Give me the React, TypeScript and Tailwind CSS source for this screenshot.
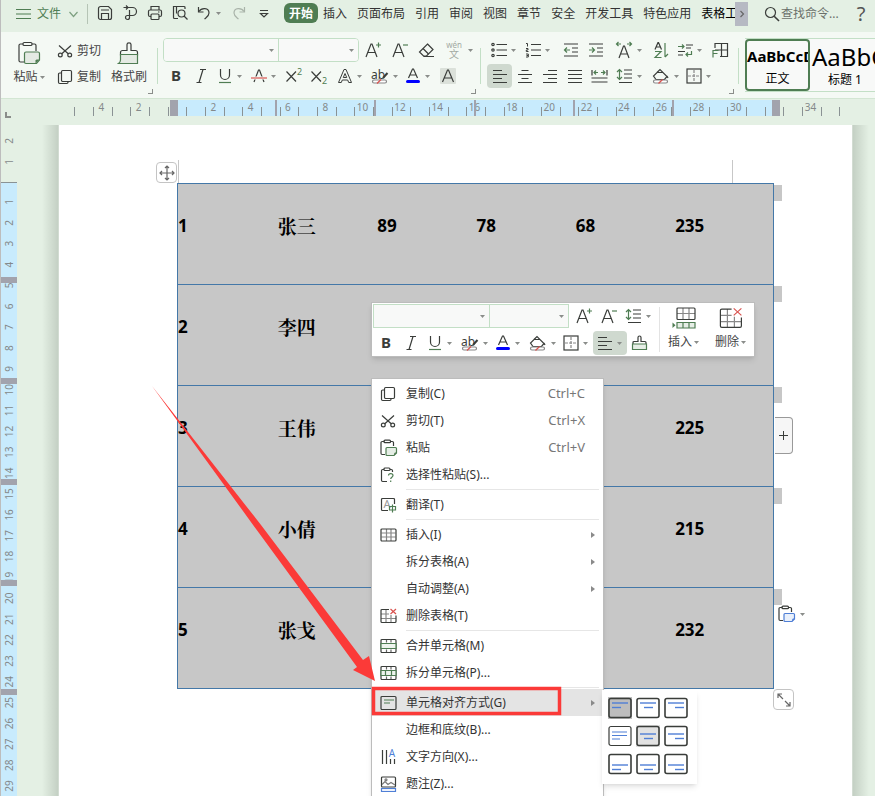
import type { ReactNode } from 'react';
import clsx from 'clsx';

const INK = '#3a3d3a';
const GREEN = '#4f7d53';
const RED = '#d9534f';
const BLUE = '#4f7fd6';

type IconProps = { w?: number; h?: number; children: ReactNode };

const Icon = ({ w = 16, h = 16, children }: IconProps) => (
  <svg
    width={w}
    height={h}
    viewBox={`0 0 ${w} ${h}`}
    fill="none"
    stroke={INK}
    strokeWidth={1.2}
    className="shrink-0"
    aria-hidden="true"
  >
    {children}
  </svg>
);

const Caret = () => (
  <svg width="5" height="3" viewBox="0 0 5 3" className="shrink-0" aria-hidden="true">
    <path d="M0 0h5L2.5 3z" fill="#8a8d8a" />
  </svg>
);

const Letter = ({ x, y, size, fill = INK, bold, text }: {
  x: number; y: number; size: number; fill?: string; bold?: boolean; text: string;
}) => (
  <text x={x} y={y} fontSize={size} fill={fill} stroke="none" textAnchor="middle" fontWeight={bold ? 700 : 400}>
    {text}
  </text>
);

/* ---------- icons ---------- */

const CopyIcon = () => (
  <Icon>
    <rect x="4.5" y="1.5" width="10" height="11" rx="1.2" />
    <path d="M4.5 4H2.7a1.2 1.2 0 0 0-1.2 1.2v8.1a1.2 1.2 0 0 0 1.2 1.2h7.1a1.2 1.2 0 0 0 1.2-1.2v-.8" />
  </Icon>
);

const CutIcon = () => (
  <Icon>
    <path d="M2 2.5l9.5 8.5M14 2.5L4.5 11" />
    <circle cx="3.3" cy="12" r="1.9" />
    <circle cx="12.7" cy="12" r="1.9" />
  </Icon>
);

const PasteIcon = ({ color = GREEN, fill = '#e6eee6' }: { color?: string; fill?: string }) => (
  <Icon w={18} h={18}>
    <path d="M4.5 2.5H2.2A1.2 1.2 0 0 0 1 3.7v10.6a1.2 1.2 0 0 0 1.2 1.2H5M10.5 2.5h1.8a1.2 1.2 0 0 1 1.2 1.2V7" />
    <rect x="4" y="1.2" width="6.500" height="2.500" rx="1" />
    <path d="M7 8.500h8.500a1 1 0 0 1 1 1V14l-2.500 2.500H7a1 1 0 0 1-1-1v-6a1 1 0 0 1 1-1z" stroke={color} fill={fill} />
    <path d="M16.500 13.500v.500l-2.500 2.500v-2l1-1z" fill={color} stroke="none" />
  </Icon>
);

const BigPasteIcon = () => (
  <Icon w={24} h={24}>
    <path d="M6 3H3.500A1.500 1.500 0 0 0 2 4.500v15A1.500 1.500 0 0 0 3.500 21H7M15 3h2.500A1.500 1.500 0 0 1 19 4.500V10" />
    <rect x="6" y="1.500" width="9" height="3" rx="1.300" />
    <path d="M9 11h12a1.500 1.500 0 0 1 1.500 1.500V19l-3 3.500H9A1.500 1.500 0 0 1 7.500 21v-8.500A1.500 1.500 0 0 1 9 11z" stroke={GREEN} fill="#e4eae3" />
    <path d="M22.500 18.500l-4 4v-3l1-1z" fill={GREEN} stroke="none" />
  </Icon>
);

const PasteSpecialIcon = () => (
  <Icon>
    <path d="M4 2.500H2.700a1.200 1.200 0 0 0-1.200 1.200v9.600a1.200 1.200 0 0 0 1.200 1.200H7M10 2.500h1.300a1.200 1.200 0 0 1 1.200 1.200V5" />
    <rect x="4" y="1" width="6" height="2.500" rx="1" />
    <path d="M8.500 8.500c0-2.600 4.500-2.600 4.500 0 0 1.700-2.300 1.700-2.300 3.500M10.700 13.500v1.500" stroke={GREEN} />
  </Icon>
);

const BrushIcon = ({ small }: { small?: boolean }) =>
  small ? (
    <Icon w={17} h={16}>
      <path d="M2 9V7.500a1 1 0 0 1 1-1h4V2.500a1.500 1.500 0 0 1 3 0v4h4a1 1 0 0 1 1 1V9" />
      <path d="M1.500 9h14v5.500h-14z" stroke={GREEN} fill="#e6eee6" />
    </Icon>
  ) : (
    <Icon w={24} h={24}>
      <path d="M10 9.500V3.500C10 1.300 14 1.300 14 3.500v6h4.500a2 2 0 0 1 2 2V14h-17v-2.500a2 2 0 0 1 2-2z" />
      <path d="M3.500 13.500h17v9h-19c1.500-1 2-2 2-3.500z" stroke={GREEN} fill="#e4eae3" />
    </Icon>
  );

const TranslateIcon = () => (
  <Icon w={17}>
    <path d="M14.500 7V2.500a1 1 0 0 0-1-1h-11a1 1 0 0 0-1 1v10a1 1 0 0 0 1 1H8" />
    <Letter x={7} y={11} size={11} fill="#999" text="A" />
    <path d="M9.500 9.500h6v3.500h-6zM12.500 7.500v8" stroke={GREEN} />
  </Icon>
);

const TableIcon = () => (
  <Icon w={17}>
    <path d="M1.500 6h14M1.500 10h14M6.500 2v12M11 2v12" stroke="#888" />
    <rect x="1" y="2" width="15" height="12" rx="1" />
  </Icon>
);

const DeleteTableIcon = ({ big }: { big?: boolean }) => {
  const s = big ? 1.4 : 1;
  return (
    <Icon w={big ? 24 : 17} h={big ? 23 : 16}>
      <g transform={`scale(${s})`} strokeWidth={1.2 / s}>
        <path d="M1 6h8M1 10.500h15M6 1.500v13M11 7v7.500" stroke="#888" />
        <path d="M9 1.500H2a1 1 0 0 0-1 1v11a1 1 0 0 0 1 1h13a1 1 0 0 0 1-1V7.500" />
        <path d="M10.500 1l5.500 5M16 1l-5.500 5" stroke={RED} />
      </g>
    </Icon>
  );
};

const InsertRowIcon = () => (
  <Icon w={24} h={23}>
    <path d="M5 6.500h18M11 1v11M17 1v11" stroke="#888" />
    <rect x="5" y="1" width="18" height="11.500" rx="1" />
    <path d="M5 15.500h18v5.500H5zM11 15.500v5.500M17 15.500v5.500" stroke={GREEN} fill="#e6eee6" />
    <path d="M0.500 15.500l3 2.700-3 2.700z" fill={GREEN} stroke="none" />
  </Icon>
);

const MergeIcon = ({ split }: { split?: boolean }) => (
  <Icon w={17}>
    <path d="M6.500 1.500v3M11 1.500v3M6.500 11.500v3M11 11.500v3" stroke="#666" />
    <rect x="1" y="1.500" width="15" height="13" rx="1" />
    <path d="M1 5.500h15v5H1z" stroke={GREEN} fill="#eef4ee" />
    {split && <path d="M5.500 5.500v5M11.500 5.500v5" stroke={GREEN} />}
  </Icon>
);

const CellAlignIcon = () => (
  <Icon w={17}>
    <rect x="1" y="1.500" width="15" height="13" rx="1" />
    <path d="M4 5h10M4 8h6" stroke={GREEN} />
  </Icon>
);

const TextDirIcon = () => (
  <Icon w={17}>
    <path d="M2.500 1v14M6.500 1v14M10.500 10v5M14.500 10v5" />
    <Letter x={12} y={8} size={10} fill={BLUE} text="A" />
  </Icon>
);

const CaptionIcon = () => (
  <Icon w={17}>
    <rect x="1.500" y="1" width="14" height="10" rx="1" />
    <path d="M2 8.500l3-3 3 3 3-2 4 2.500" stroke="#777" />
    <circle cx="6" cy="3.800" r="1" stroke="#777" />
    <rect x="1.500" y="12.500" width="14" height="3" stroke={BLUE} />
  </Icon>
);

const SaveIcon = () => (
  <Icon>
    <path d="M3.500 1.500h8l3 3v8a2 2 0 0 1-2 2h-9a2 2 0 0 1-2-2v-9a2 2 0 0 1 2-2z" />
    <path d="M4 5h8M4.500 14V8.500h7V14" />
  </Icon>
);

const ExportIcon = () => (
  <Icon>
    <path d="M1.500 2.500h9a4 4 0 0 1 0 8H7M4 .500l2 2-2 2" />
    <path d="M7.500 5v7.500a2 2 0 1 1-2-2h2" />
  </Icon>
);

const PrintIcon = () => (
  <Icon>
    <path d="M4 5V1.500h8V5M4 11.500H3a1.500 1.500 0 0 1-1.500-1.500V6.500A1.500 1.500 0 0 1 3 5h10a1.500 1.500 0 0 1 1.500 1.500V10a1.500 1.500 0 0 1-1.500 1.500h-1" />
    <rect x="4" y="9" width="8" height="5.500" rx="1" />
    <path d="M11 7h1.500" />
  </Icon>
);

const PreviewIcon = () => (
  <Icon>
    <path d="M13 4V2.500a1 1 0 0 0-1-1H1.500v11a1 1 0 0 0 1 1H6M4.500 1.500v7" />
    <circle cx="9.500" cy="8.500" r="3.500" />
    <path d="M12 11l3.500 3.500" />
  </Icon>
);

const UndoIcon = ({ redo }: { redo?: boolean }) => (
  <Icon>
    <g transform={redo ? 'translate(16 0) scale(-1 1)' : undefined} stroke={redo ? '#a9b3a9' : INK}>
      <path d="M2.500 2v5h5" />
      <path d="M3 6.500C5.500 2.500 13 2.500 13 8c0 3-2 4-4.500 6" />
    </g>
  </Icon>
);

const MoreIcon = () => (
  <Icon>
    <path d="M4 5.500h8M4.500 8.500L8 12l3.500-3.500z" />
  </Icon>
);

const SearchIcon = () => (
  <Icon>
    <circle cx="6.500" cy="6.500" r="5" />
    <path d="M10.200 10.200L15 15" strokeWidth="1.600" />
  </Icon>
);

const BoldIcon = () => (
  <Icon>
    <Letter x={8} y={13} size={15} bold text="B" />
  </Icon>
);

const ItalicIcon = () => (
  <Icon>
    <path d="M7 1.500h6M3.500 14.500h5M10 1.500l-4 13" />
  </Icon>
);

const UnderlineIcon = () => (
  <Icon>
    <path d="M3.500 1v6a4.500 4.500 0 0 0 9 0V1" />
    <path d="M2 14.500h12" stroke={GREEN} />
  </Icon>
);

const StrikeIcon = () => (
  <Icon>
    <path d="M3 14L7.500 2h1L13 14" />
    <path d="M0 10h16" stroke="#f4f9f4" strokeWidth="3" />
    <path d="M0 10h16" stroke={RED} />
  </Icon>
);

const ScriptIcon = ({ sup }: { sup?: boolean }) => (
  <Icon w={18}>
    <path d="M1.500 3.500l9.500 10M11 3.500l-9.500 10" />
    <Letter x={14.500} y={sup ? 7 : 16} size={9} fill={GREEN} text="2" />
  </Icon>
);

const SizeIcon = ({ up }: { up?: boolean }) => (
  <Icon w={18} h={18}>
    <path d="M2 16L7 3h1l5 13M4 11.500h7" />
    <path d={up ? 'M14.500 1.500v5M12 4h5' : 'M12 4h5'} stroke={GREEN} />
  </Icon>
);

const EraserIcon = () => (
  <Icon w={17}>
    <path d="M9.500 2L15 7.500 8.500 14H5.500L1.500 10z" />
    <path d="M5 6.500l5.500 5.500M5.500 14.500H16" />
  </Icon>
);

const PinyinIcon = () => (
  <Icon w={20} h={20}>
    <Letter x={10} y={8} size={8} fill="#a3aaa3" text="wén" />
    <Letter x={10} y={18} size={10} fill="#a3aaa3" text="文" />
  </Icon>
);

const OutlineAIcon = () => (
  <Icon>
    <path d="M1.500 14.500L7 1.500h2l5.500 13h-2.800l-1-2.500H5.300l-1 2.500zM6.300 9.500L8 5.500l1.700 4z" strokeWidth="1" />
  </Icon>
);

const HighlightIcon = () => (
  <Icon w={18}>
    <Letter x={7} y={11} size={12} text="ab" />
    <path d="M16.500 5l-4.500 5" strokeWidth="2" />
    <rect x="1.500" y="12" width="14" height="3" rx="1.500" stroke="#888" fill="#fff" />
    <path d="M6 15.500l4-4" stroke={RED} />
  </Icon>
);

const FontColorIcon = () => (
  <Icon>
    <path d="M3.500 10L7.500 1h1l4 9M5 7h6" />
    <rect x="1" y="12" width="14" height="3" rx="1.500" fill="#0000ff" stroke="none" />
  </Icon>
);

const ShadeAIcon = () => (
  <Icon>
    <rect width="16" height="16" rx="1" fill="#dbe1da" stroke="none" />
    <path d="M2.500 14L7.500 2h1l5 12M4.500 10h7" />
  </Icon>
);

const BulletsIcon = () => (
  <Icon>
    <path d="M5.500 2.500H16M5.500 8H16M5.500 13.500H16" />
    <circle cx="2" cy="2.500" r="1.200" />
    <circle cx="2" cy="8" r="1.200" />
    <circle cx="2" cy="13.500" r="1.200" />
  </Icon>
);

const NumberingIcon = () => (
  <Icon>
    <path d="M6 2.500h10M6 8h10M6 13.500h10" />
    <path d="M1 1.500h1.500v3M1 6.500h2V8H1.300v1.500H3.500M1 12h2.300v3H1M3.300 13.500H1.500" strokeWidth="1" />
  </Icon>
);

const IndentIcon = ({ out }: { out?: boolean }) => (
  <Icon>
    <path d="M1 2h14M9 6h6M9 10h6M1 14h14" />
    <path d={out ? 'M7 8H1.500M4 5.500L1.500 8 4 10.500' : 'M1 8h5.500M4 5.500L6.500 8 4 10.500'} stroke={GREEN} />
  </Icon>
);

const CharScaleIcon = () => (
  <Icon w={18} h={18}>
    <path d="M4 17L8.500 5h1L14 17M5.500 13h7" />
    <path d="M6 3H1.500M3.500 1l-2 2 2 2M12 3h4.500M14.500 1l2 2-2 2" stroke={GREEN} />
  </Icon>
);

const SortIcon = () => (
  <Icon>
    <path d="M2 7.500L5 .500h.500l3 7M3 5h4.500" />
    <path d="M2 9.500h6l-6 6h6.500" stroke={GREEN} />
    <path d="M12 1v14M12 15l3-3" stroke={GREEN} />
  </Icon>
);

const TabsIcon = () => (
  <Icon>
    <path d="M9 3h7M9 6h5M1 9.500h7M1 13h5" />
    <path d="M1 4.500h6M5 2.500l2 2-2 2M14.500 9v3.500H9M11 10.500l-2 2 2 2" stroke={GREEN} />
  </Icon>
);

const TableTextIcon = () => (
  <Icon w={18}>
    <path d="M4 6V1.500h12.500v13H9M10.500 1.500v13M4 8h12.500" />
    <path d="M2 15.500V8.500h5.500M2 11.500h4.500" stroke={GREEN} />
  </Icon>
);

const TextAlignIcon = ({ kind }: { kind: 'left' | 'center' | 'right' | 'justify' }) => (
  <Icon>
    {kind === 'left' && <path d="M1 2.500h9M1 6.500h14M1 10.500h9M1 14.500h14" />}
    {kind === 'center' && <path d="M4.500 2.500h7M1 6.500h14M4.500 10.500h7M1 14.500h14" />}
    {kind === 'right' && <path d="M6 2.500h9M1 6.500h14M6 10.500h9M1 14.500h14" />}
    {kind === 'justify' && <path d="M1 2.500h14M1 6.500h14M1 10.500h14M1 14.500h14" />}
  </Icon>
);

const DistributeIcon = () => (
  <Icon w={17}>
    <path d="M.500 10h16M.500 14h16M1 2v5.500M16 2v5.500" />
    <path d="M3 4.500h4M5 2.500l-2 2 2 2M14 4.500h-4M12 2.500l2 2-2 2" stroke={GREEN} />
  </Icon>
);

const LineSpacingIcon = () => (
  <Icon w={17}>
    <path d="M8 2h8M8 6h8M8 10h8M3 14.500h13" />
    <path d="M3.500 1.500v10M1 4l2.500-2.500L6 4M1 9l2.500 2.500L6 9" stroke={GREEN} />
  </Icon>
);

const FillIcon = () => (
  <Icon w={18}>
    <path d="M5 4.500l3-3 7 7-2.500 3H4L1.500 8 5 4.500h6M15 8l1 2" />
    <rect x="1.500" y="12" width="14" height="3" rx="1.500" stroke="#888" fill="#fff" />
    <path d="M6.500 15.500l4-4" stroke={RED} />
  </Icon>
);

const BorderIcon = () => (
  <Icon>
    <rect x="1" y="1" width="14" height="14" />
    <path d="M8 2v12M2 8h12" stroke="#888" strokeDasharray="3 1" />
  </Icon>
);

/* ---------- small building blocks ---------- */

type ToolProps = { label: string; drop?: boolean; active?: boolean; wide?: boolean; children: ReactNode };

const Tool = ({ label, drop, active, wide, children }: ToolProps) => (
  <button
    type="button"
    aria-label={label}
    className={clsx(
      'flex h-6 shrink-0 items-center gap-1 rounded',
      drop ? 'w-[34px] pl-1' : wide ? 'w-[27px] justify-center' : 'w-[25px] justify-center',
      active && 'bg-[#cfd9cf]',
    )}
  >
    {children}
    {drop && <Caret />}
  </button>
);

const Combo = ({ label, className }: { label: string; className: string }) => (
  <div className={clsx('relative flex items-center bg-[#f8f9f8]', className)}>
    <select aria-label={label} className="h-full w-full appearance-none outline-none">
      <option value="" />
    </select>
    <span className="pointer-events-none absolute right-1">
      <Caret />
    </span>
  </div>
);

const Divider = () => <div className="mt-4 h-9 w-px shrink-0 bg-[#c3dfc6]" />;

const Corner = () => (
  <span className="absolute right-1 bottom-1 h-[5px] w-[5px] border-r border-b border-[#8a8d8a]" />
);

/* ---------- title bar ---------- */

const TABS = ['开始', '插入', '页面布局', '引用', '审阅', '视图', '章节', '安全', '开发工具', '特色应用', '表格工具'];

const TitleBar = () => (
  <header className="flex h-8 shrink-0 items-start pt-1 pl-[15px] text-[#333]">
    <button type="button" className="flex h-5 shrink-0 items-center gap-1.5 text-[#4f7d53]">
      <Icon w={15}>
        <path d="M0 3.500h15M0 8h15M0 12.500h15" stroke={GREEN} />
      </Icon>
      文件
      <Icon>
        <path d="M2.500 6l4 4.500L10.500 6" stroke="#7da080" />
      </Icon>
    </button>
    <div className="ml-1 h-5 w-px shrink-0 bg-[#b5c4b5]" />
    <div className="-mt-[3px] mr-2 ml-1 flex shrink-0">
      <Tool label="保存"><SaveIcon /></Tool>
      <Tool label="输出"><ExportIcon /></Tool>
      <Tool label="打印"><PrintIcon /></Tool>
      <Tool label="打印预览"><PreviewIcon /></Tool>
      <Tool label="撤销" drop><UndoIcon /></Tool>
      <Tool label="恢复"><UndoIcon redo /></Tool>
      <Tool label="更多"><MoreIcon /></Tool>
    </div>
    <nav className="-mt-px flex min-w-0 flex-1 overflow-hidden">
      {TABS.map((tab, i) => (
        <a
          key={tab}
          href="#"
          className={clsx(
            'h-5 shrink-0 px-[5px] leading-[21px]',
            i === 0 && 'rounded-md bg-[#4f7d53] font-bold text-white',
            i === TABS.length - 1 && 'text-black',
          )}
        >
          {tab}
        </a>
      ))}
    </nav>
    <button type="button" aria-label="下一组" className="-mt-0.5 flex h-6 w-[13px] shrink-0 items-center justify-center bg-[#b6b9c3]">
      <Icon w={6} h={8}>
        <path d="M1.500 1l3 3-3 3" stroke="#666" />
      </Icon>
    </button>
    <label className="ml-4 flex h-5 shrink-0 items-center gap-px">
      <SearchIcon />
      <input
        type="text"
        aria-label="查找命令"
        placeholder="查找命令..."
        className="w-[62px] outline-none placeholder:text-[#6b706b]"
      />
    </label>
    <button type="button" aria-label="帮助" className="mr-1 ml-2 h-5 w-5 shrink-0 text-xl leading-5 text-[#555]">
      ?
    </button>
  </header>
);

/* ---------- ribbon ---------- */

const Ribbon = () => (
  <section className="flex h-[67px] shrink-0 overflow-hidden border-b border-[#d3e6d3] bg-[#f4f9f4] text-[#444]">
    <div className="relative flex w-[156px] shrink-0 pt-1.5 pl-2.5">
      <button type="button" className="flex w-9 flex-col items-center gap-1 pt-[3px]">
        <BigPasteIcon />
        <span className="flex items-center gap-0.5 leading-4 whitespace-nowrap">粘贴<Caret /></span>
      </button>
      <div className="ml-2.5 flex flex-col gap-1.5 pt-[3px]">
        <button type="button" className="flex h-5 items-center gap-1"><CutIcon />剪切</button>
        <button type="button" className="flex h-5 items-center gap-1"><CopyIcon />复制</button>
      </div>
      <button type="button" className="ml-2.5 flex flex-col items-center gap-1 pt-[3px]">
        <BrushIcon />
        <span className="leading-4">格式刷</span>
      </button>
      <Corner />
    </div>
    <Divider />
    <div className="relative flex w-[322px] shrink-0 flex-col gap-0.5 pt-1.5 pl-[5px]">
      <div className="flex">
        <div className="flex h-6 overflow-hidden rounded border border-[#c3dfc6]">
          <Combo label="字体" className="w-[115px] border-r border-[#c3dfc6]" />
          <Combo label="字号" className="w-[79px]" />
        </div>
        <Tool label="增大字号" wide><SizeIcon up /></Tool>
        <Tool label="减小字号" wide><SizeIcon /></Tool>
        <Tool label="清除格式" wide><EraserIcon /></Tool>
        <Tool label="拼音指南" drop><PinyinIcon /></Tool>
      </div>
      <div className="flex gap-0.5">
        <div className="flex">
          <Tool label="加粗"><BoldIcon /></Tool>
          <Tool label="倾斜"><ItalicIcon /></Tool>
          <Tool label="下划线" drop><UnderlineIcon /></Tool>
          <Tool label="删除线" drop><StrikeIcon /></Tool>
          <Tool label="上标"><ScriptIcon sup /></Tool>
          <Tool label="下标"><ScriptIcon /></Tool>
        </div>
        <div className="flex">
          <Tool label="文字效果" drop><OutlineAIcon /></Tool>
          <Tool label="突出显示" drop><HighlightIcon /></Tool>
          <Tool label="字体颜色" drop><FontColorIcon /></Tool>
          <Tool label="字符底纹"><ShadeAIcon /></Tool>
        </div>
      </div>
      <Corner />
    </div>
    <Divider />
    <div className="relative flex w-[257px] shrink-0 flex-col gap-0.5 pt-1.5 pl-1.5">
      <div className="flex gap-[3px]">
        <div className="flex">
          <Tool label="项目符号" drop><BulletsIcon /></Tool>
          <Tool label="编号" drop><NumberingIcon /></Tool>
        </div>
        <div className="flex">
          <Tool label="减少缩进量"><IndentIcon out /></Tool>
          <Tool label="增加缩进量"><IndentIcon /></Tool>
        </div>
        <Tool label="中文版式" drop><CharScaleIcon /></Tool>
        <div className="flex">
          <Tool label="排序"><SortIcon /></Tool>
          <Tool label="制表位" drop><TabsIcon /></Tool>
          <Tool label="文字工具"><TableTextIcon /></Tool>
        </div>
      </div>
      <div className="flex gap-0.5">
        <div className="flex">
          <Tool label="左对齐" active><TextAlignIcon kind="left" /></Tool>
          <Tool label="居中"><TextAlignIcon kind="center" /></Tool>
          <Tool label="右对齐"><TextAlignIcon kind="right" /></Tool>
          <Tool label="两端对齐"><TextAlignIcon kind="justify" /></Tool>
          <Tool label="分散对齐"><DistributeIcon /></Tool>
          <Tool label="行距" drop><LineSpacingIcon /></Tool>
        </div>
        <div className="flex">
          <Tool label="底纹" drop><FillIcon /></Tool>
          <Tool label="边框" drop><BorderIcon /></Tool>
        </div>
      </div>
      <Corner />
    </div>
    <Divider />
    <div className="my-1.5 ml-1.5 flex min-w-0 flex-1 overflow-hidden border-y border-[#c3dfc6] bg-[#f8f9f8] text-black">
      <button type="button" className="w-[65px] shrink-0 overflow-hidden rounded border-2 border-[#4f7d53]">
        <span className="block h-7 text-[15px] leading-7 font-bold">AaBbCcDd</span>
        <span className="block leading-[18px]">正文</span>
      </button>
      <button type="button" className="w-[68px] shrink-0 overflow-hidden pt-0.5 pl-0.5">
        <span className="block h-7 text-2xl leading-7">AaBbCc</span>
        <span className="block leading-[18px]">标题 1</span>
      </button>
    </div>
  </section>
);

/* ---------- rulers ---------- */

const ZERO = 176;
const UNIT = 18.66;
const COLUMN_MARKS = [275, 374, 474, 573, 672];

const TopRuler = () => {
  const ticks = Array.from({ length: 42 }, (_, i) => Math.round(ZERO + UNIT * (i - 5.5)));
  const labels = Array.from({ length: 20 }, (_, i) => (i - 2) * 2).filter(n => n !== 0 && n !== 32 && n <= 34);
  return (
    <svg className="mt-px h-[25px] w-full shrink-0" aria-hidden="true">
      <rect x="177" y="0" width="596" height="16" fill="#c8ebfd" />
      {ticks.map(x => (
        <rect key={x} x={x} y="7" width="1" height="9" fill="#8a9294" />
      ))}
      {labels.map(n => (
        <text key={n} x={ZERO - 1 + UNIT * n} y="11" fontSize="10" fill="#84898a" textAnchor="middle">
          {Math.abs(n)}
        </text>
      ))}
      {COLUMN_MARKS.map(x => (
        <rect key={x} x={x - 1} y="0" width="2" height="16" fill="#a2a3ad" />
      ))}
      <rect x="169" y="0" width="8" height="16" fill="#a2a3ad" />
      <rect x="771" y="0" width="8" height="16" fill="#a2a3ad" />
      <path d="M4 12v6h6v-2H6v-4z" fill="#8a8d8a" />
    </svg>
  );
};

const SideRuler = () => {
  const marks = [152, 253, 354, 455, 564];
  const labels = Array.from({ length: 29 }, (_, i) => ({ n: i + 1, y: 77 + 20.86 * i }));
  return (
    <svg className="h-full w-4 shrink-0" aria-hidden="true">
      <rect x="0" y="57" width="16" height="2000" fill="#c8ebfd" />
      <rect x="0" y="57" width="16" height="1" fill="#8a9294" />
      {[{ n: 2, y: 16 }, { n: 1, y: 37 }, ...labels].map(({ n, y }) => (
        <text
          key={y}
          transform={`translate(12 ${y}) rotate(-90)`}
          fontSize="10"
          fill="#84898a"
          textAnchor="middle"
        >
          {n}
        </text>
      ))}
      {marks.map(y => (
        <rect key={y} x="0" y={y} width="16" height="6" fill="#a2a3ad" />
      ))}
    </svg>
  );
};

/* ---------- document ---------- */

const ROWS = [
  ['1', '张三', '89', '78', '68', '235'],
  ['2', '李四', '', '', '', ''],
  ['3', '王伟', '', '', '', '225'],
  ['4', '小倩', '', '', '', '215'],
  ['5', '张戈', '', '', '', '232'],
];

const ScoreTable = () => (
  <table className="w-full table-fixed border-collapse border border-[#4478a8] bg-[#c7c7c7] text-[17px] leading-6 font-bold text-black">
    <tbody>
      {ROWS.map(row => (
        <tr key={row[0]} className="h-[101px] border-b border-[#4478a8] align-top">
          {row.map((cell, i) => (
            <td
              key={i}
              className={clsx(
                'pt-[30px]',
                i > 0 && 'pl-px',
                i === 1 && "font-['Noto_Serif_CJK_SC','Noto_Sans_CJK_SC',serif] text-[19px]",
              )}
            >
              {cell}
            </td>
          ))}
        </tr>
      ))}
    </tbody>
  </table>
);

/* ---------- floating toolbar ---------- */

const MiniToolbar = () => (
  <div className="absolute top-[302px] left-[370px] flex h-[55px] w-[384px] border border-[#bcbcbc] bg-white text-[#444] shadow-md">
    <div className="flex flex-col gap-[3px] pt-px pl-px">
      <div className="flex">
        <div className="flex h-6 border border-[#c3dfc6]">
          <Combo label="字体" className="w-[116px] border-r border-[#c3dfc6]" />
          <Combo label="字号" className="w-[78px]" />
        </div>
        <div className="ml-0.5 flex">
          <Tool label="增大字号"><SizeIcon up /></Tool>
          <Tool label="减小字号"><SizeIcon /></Tool>
          <Tool label="行距" drop><LineSpacingIcon /></Tool>
        </div>
      </div>
      <div className="flex">
        <Tool label="加粗"><BoldIcon /></Tool>
        <Tool label="倾斜"><ItalicIcon /></Tool>
        <Tool label="下划线" drop><UnderlineIcon /></Tool>
        <Tool label="突出显示" drop><HighlightIcon /></Tool>
        <Tool label="字体颜色" drop><FontColorIcon /></Tool>
        <Tool label="底纹" drop><FillIcon /></Tool>
        <Tool label="边框" drop><BorderIcon /></Tool>
        <Tool label="对齐" drop active><TextAlignIcon kind="left" /></Tool>
        <Tool label="格式刷"><BrushIcon small /></Tool>
      </div>
    </div>
    <div className="my-1 ml-auto w-px bg-[#e3e3e3]" />
    <button type="button" className="flex w-[47px] flex-col items-center gap-1 pt-1">
      <InsertRowIcon />
      <span className="flex items-center gap-0.5 whitespace-nowrap">插入<Caret /></span>
    </button>
    <button type="button" className="flex w-[47px] flex-col items-center gap-1 pt-1">
      <DeleteTableIcon big />
      <span className="flex items-center gap-0.5 whitespace-nowrap">删除<Caret /></span>
    </button>
  </div>
);

/* ---------- context menu ---------- */

type MenuItem = { text: string; icon?: ReactNode; keys?: string; sub?: boolean; active?: boolean };

const MENU: MenuItem[][] = [
  [
    { text: '复制(C)', icon: <CopyIcon />, keys: 'Ctrl+C' },
    { text: '剪切(T)', icon: <CutIcon />, keys: 'Ctrl+X' },
    { text: '粘贴', icon: <PasteIcon />, keys: 'Ctrl+V' },
    { text: '选择性粘贴(S)...', icon: <PasteSpecialIcon /> },
  ],
  [{ text: '翻译(T)', icon: <TranslateIcon /> }],
  [
    { text: '插入(I)', icon: <TableIcon />, sub: true },
    { text: '拆分表格(A)', sub: true },
    { text: '自动调整(A)', sub: true },
    { text: '删除表格(T)', icon: <DeleteTableIcon /> },
  ],
  [
    { text: '合并单元格(M)', icon: <MergeIcon /> },
    { text: '拆分单元格(P)...', icon: <MergeIcon split /> },
  ],
  [
    { text: '单元格对齐方式(G)', icon: <CellAlignIcon />, sub: true, active: true },
    { text: '边框和底纹(B)...' },
    { text: '文字方向(X)...', icon: <TextDirIcon /> },
    { text: '题注(Z)...', icon: <CaptionIcon /> },
  ],
];

const ContextMenu = () => (
  <div className="absolute top-[378px] left-[370px] w-[233px] border border-[#bcbcbc] bg-white pt-px pb-4 text-[#333] shadow-md">
    {MENU.map((group, g) => (
      <div key={g}>
        {g > 0 && <div className="my-px mr-1 ml-[34px] h-px bg-[#e6e6e6]" />}
        {group.map(item => (
          <button
            type="button"
            key={item.text}
            className={clsx('flex h-[27px] w-full items-center pl-2 text-left', item.active && 'bg-[#e4e4e4]')}
          >
            <span className="flex w-[26px] shrink-0">{item.icon}</span>
            <span className="flex-1">{item.text}</span>
            {item.keys && <span className="mr-[18px] text-[13px] text-[#777]">{item.keys}</span>}
            {item.sub && (
              <svg width="4" height="6" viewBox="0 0 4 6" className="mr-2" aria-hidden="true">
                <path d="M0 0l4 3-4 3z" fill="#8a8a8a" />
              </svg>
            )}
          </button>
        ))}
      </div>
    ))}
  </div>
);

const CELL_ALIGNS = [
  { label: '靠上左对齐', y: 6, short: 4 },
  { label: '靠上居中', y: 6, short: 8 },
  { label: '靠上右对齐', y: 6, short: 11 },
  { label: '两端对齐', y: 7, short: 4 },
  { label: '水平居中', y: 9, short: 8 },
  { label: '中部右对齐', y: 9, short: 11 },
  { label: '靠下左对齐', y: 12, short: 4 },
  { label: '靠下居中', y: 12, short: 8 },
  { label: '靠下右对齐', y: 12, short: 11 },
];

const AlignMenu = () => (
  <div className="absolute top-[690px] left-[601px] grid grid-cols-3 gap-x-1 gap-y-1.5 bg-white pt-[7px] pr-[9px] pb-[9px] pl-1.5 shadow-md">
    {CELL_ALIGNS.map((a, i) => (
      <button
        type="button"
        key={a.label}
        aria-label={a.label}
        className={clsx('h-[22px] w-6', i === 0 && 'bg-[#bdbdbd]', i === 4 && 'bg-[#e2e2e2]')}
      >
        <Icon w={24} h={22}>
          <rect x="1" y="1.500" width="22" height="19" rx="2" strokeWidth={i === 3 ? 1.2 : 1.6} />
          {i === 3 ? (
            <path d="M4 7h15M4 10.500h15M4 14h8" stroke={BLUE} />
          ) : (
            <>
              <path d={`M4 ${a.y}h16`} stroke={BLUE} strokeWidth="1.400" />
              <path d={`M${a.short} ${a.y + 4.5}h9`} stroke={BLUE} strokeWidth="1.400" />
            </>
          )}
        </Icon>
      </button>
    ))}
  </div>
);

/* ---------- page ---------- */

const App = () => (
  <div className="relative flex h-screen flex-col overflow-hidden border-l border-[#bdbdbd] bg-[#e4f0e4] font-['Noto_Sans','Noto_Sans_CJK_SC',sans-serif] text-xs">
    <TitleBar />
    <Ribbon />
    <TopRuler />
    <main className="flex min-h-0 flex-1">
      <SideRuler />
      <div className="ml-[25px] w-4 shrink-0 bg-linear-to-r from-[#e4f0e4] to-[#c4d0c4]" />
      <div className="flex flex-1 flex-col border-x border-[#d2dcd2] bg-white pt-[35px]">
        <div className="mr-[119px] ml-[119px] h-[23px] border-x border-[#c7c7c7]" />
        <div className="mr-[70px] ml-[118px] flex">
          <div className="flex-1">
            <ScoreTable />
          </div>
          <div className="w-2 shrink-0">
            {ROWS.map(row => (
              <div key={row[0]} className="h-[101px] pt-0.5">
                <div className="h-4 bg-[#c7c7c7]" />
              </div>
            ))}
          </div>
        </div>
      </div>
      <div className="mr-1.5 w-4 shrink-0 bg-linear-to-l from-[#e4f0e4] to-[#c4d0c4]" />
    </main>

    <button type="button" aria-label="移动表格" className="absolute top-[162px] left-[155px] flex h-[21px] w-[21px] items-center justify-center rounded-sm border border-[#c4c4c4] bg-white">
      <Icon>
        <path d="M8 1v14M1 8h14M6 3l2-2 2 2M6 13l2 2 2-2M3 6L1 8l2 2M13 6l2 2-2 2" stroke="#666" />
      </Icon>
    </button>
    <button type="button" aria-label="添加列" className="absolute top-[417px] left-[774px] flex h-[37px] w-[18px] items-center justify-center rounded-r border border-l-0 border-[#999] bg-[#f6f6f6]">
      <Icon w={11} h={11}>
        <path d="M5.500 1v9M1 5.500h9" strokeWidth="1" />
      </Icon>
    </button>
    <button type="button" aria-label="粘贴选项" className="absolute top-[605px] left-[777px] flex items-center gap-1">
      <PasteIcon color={BLUE} fill="#e9f0fb" />
      <Caret />
    </button>
    <button type="button" aria-label="调整表格大小" className="absolute top-[689px] left-[772px] flex h-[21px] w-[21px] items-center justify-center rounded-sm border border-[#c4c4c4] bg-white">
      <Icon>
        <path d="M2 6V2h4M2 2l5 5M14 10v4h-4M14 14l-5-5" stroke="#666" />
      </Icon>
    </button>

    <MiniToolbar />
    <ContextMenu />
    <AlignMenu />

    <svg className="pointer-events-none absolute top-0 left-0 h-full w-full" aria-hidden="true">
      <path d="M151 386L260 525 362 660 368 656 374 681 352 670 356 667 258 533z" fill="#fb3a38" />
      <rect x="372.500" y="688.500" width="186" height="25" fill="none" stroke="#fb3a38" strokeWidth="3.500" />
    </svg>
  </div>
);

export default App;
